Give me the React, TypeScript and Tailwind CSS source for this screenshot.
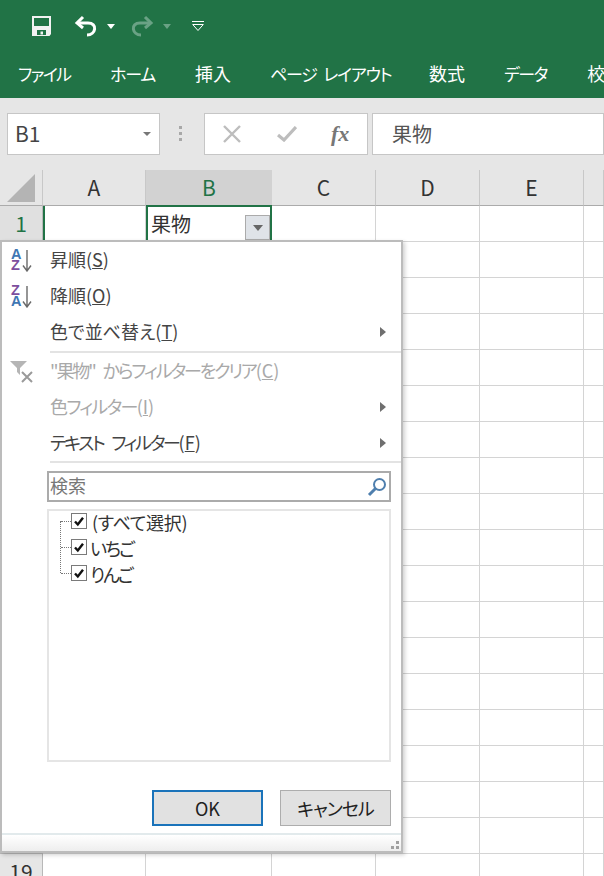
const font = { fontFamily: '"Noto Sans CJK JP", "Noto Sans", sans-serif' };

const Tri = ({ className }: { className: string }) => (
  <svg width="8" height="10" viewBox="0 0 8 10" className={className}><path d="M1 0 L7 5 L1 10Z" fill="#6f6f6f" /></svg>
);

function Item({ label, u, disabled, icon, arrow, track }: { label: string; u: string; disabled?: boolean; icon?: React.ReactNode; arrow?: boolean; track?: string }) {
  return (
    <div className={`flex h-[36px] items-center text-[18px] ${disabled ? 'text-[#a9a9a9]' : 'text-[#444444]'}`}>
      <div className="flex w-[48px] shrink-0 justify-start pl-[8px]">{icon}</div>
      <span className="mb-[2px] flex-1 whitespace-nowrap"><span className={track}>{label}</span>(<span className="underline">{u}</span>)</span>
      {arrow && <Tri className="mr-[14px]" />}
    </div>
  );
}

const AZ = ({ flip }: { flip?: boolean }) => (
  <svg width="26" height="24" viewBox="0 0 26 24">
    <text x="1" y="11" fontSize="14.5" fontWeight="700" fontFamily="Liberation Sans" fill={flip ? '#7d4f9e' : '#3f77b3'}>{flip ? 'Z' : 'A'}</text>
    <text x="1" y="22" fontSize="14.5" fontWeight="700" fontFamily="Liberation Sans" fill={flip ? '#3f77b3' : '#7d4f9e'}>{flip ? 'A' : 'Z'}</text>
    <path d="M17 2V22M13 17.5L17 23L21 17.5" stroke="#6a6a6a" strokeWidth="1.4" fill="none" />
  </svg>
);

function Check({ label, kana }: { label: string; kana?: boolean }) {
  return (
    <div className="flex h-[26px] items-center text-[18px] text-[#333333]">
      <div className="relative flex h-[16px] w-[16px] items-center justify-center border border-[#7a7a7a] bg-white">
        <svg width="12" height="12" viewBox="0 0 12 12"><path d="M2 6.5L4.8 9.5L10 2.8" stroke="#111" strokeWidth="2.4" fill="none" /></svg>
        <span className="absolute left-[-11px] top-[7px] w-[10px] border-t border-dotted border-[#777777]" />
      </div>
      <span className={kana ? 'ml-[3px] mt-[2px] tracking-[-2px]' : 'ml-[5px] mt-[2px] tracking-[-0.3px]'}>{label}</span>
    </div>
  );
}

const columns = ['', 'A', 'B', 'C', 'D', 'E', ''];
const rows = Array.from({ length: 19 }, (_, i) => i + 1);

export default function App() {
  return (
    <div className="relative flex h-[876px] w-[604px] flex-col overflow-hidden bg-white [font-feature-settings:'palt']" style={font}>
      {/* Title bar */}
      <div className="flex h-[52px] shrink-0 items-center bg-[#217346] pl-[32px]">
        <svg width="20" height="20" viewBox="0 0 20 20">
          <path fillRule="evenodd" d="M0 0H19V18L17.5 20H0Z M2 2V10H17V2Z M5 14V19H14V14Z" fill="#f2f2f2" />
          <rect x="8.5" y="15.5" width="2.5" height="3" fill="#f2f2f2" />
        </svg>
        <svg width="24" height="22" viewBox="0 0 24 22" className="ml-[22px]">
          <path d="M9 2L3 8L9 13" stroke="#fff" strokeWidth="3" fill="none" />
          <path d="M4 8H14C24 8 22 20 13 20" stroke="#fff" strokeWidth="3" fill="none" />
        </svg>
        <svg width="8" height="5" viewBox="0 0 8 5" className="ml-[9px]"><path d="M0 0H8L4 5Z" fill="#fff" /></svg>
        <svg width="24" height="22" viewBox="0 0 24 22" className="ml-[15px]">
          <path d="M15 2L21 8L15 13" stroke="#6aa285" strokeWidth="3" fill="none" />
          <path d="M20 8H10C0 8 2 20 11 20" stroke="#6aa285" strokeWidth="3" fill="none" />
        </svg>
        <svg width="8" height="5" viewBox="0 0 8 5" className="ml-[9px]"><path d="M0 0H8L4 5Z" fill="#6aa285" /></svg>
        <svg width="12" height="10" viewBox="0 0 12 10" className="ml-[21px]">
          <path d="M0 0.5H12M0.7 3.5H11.3L6 9.5Z" stroke="#fff" strokeWidth="1" fill="none" />
        </svg>
      </div>
      {/* Tabs */}
      <div className="flex h-[46px] shrink-0 items-center gap-[40px] bg-[#217346] pb-[3px] pl-[18px] text-[18px] whitespace-nowrap text-white">
        <span className="w-[52px] text-[17px] tracking-[-1.6px]">ファイル</span>
        <span className="w-[45px] text-[17px] tracking-[-1.2px]">ホーム</span>
        <span className="w-[35px]">挿入</span>
        <span className="w-[119px] text-[17px] tracking-[-1.2px] [word-spacing:4px]">ページ レイアウト</span>
        <span className="w-[35px]">数式</span>
        <span className="w-[44px] text-[17px] tracking-[-1.6px]">データ</span>
        <span className="w-[17px] overflow-hidden">校</span>
      </div>
      {/* Formula bar */}
      <div className="flex h-[72px] shrink-0 items-start bg-[#e6e6e6] pl-[7px] pt-[15px]">
        <div className="flex h-[42px] w-[153px] items-center justify-between border border-[#c6c6c6] bg-white pl-[7px] pr-[8px] text-[21px] text-[#444444]">
          <span>B1</span>
          <svg width="8" height="4" viewBox="0 0 8 4"><path d="M0 0H8L4 4Z" fill="#777777" /></svg>
        </div>
        <div className="ml-[19px] mt-[13px] flex w-[5px] flex-col gap-[3px]">
          <span className="h-[3px] w-[3px] bg-[#a8a8a8]" />
          <span className="h-[3px] w-[3px] bg-[#a8a8a8]" />
          <span className="h-[3px] w-[3px] bg-[#a8a8a8]" />
        </div>
        <div className="ml-[20px] flex h-[42px] w-[164px] items-center border border-[#c6c6c6] bg-white">
          <svg width="18" height="18" viewBox="0 0 18 18" className="ml-[18px]"><path d="M1 1L17 17M17 1L1 17" stroke="#bdbdbd" strokeWidth="2.4" /></svg>
          <svg width="20" height="16" viewBox="0 0 20 16" className="ml-[36px]"><path d="M1 9L7 14L19 1" stroke="#bdbdbd" strokeWidth="3.2" fill="none" /></svg>
          <span className="ml-[34px] text-[22px] leading-none font-bold italic text-[#777777]" style={{ fontFamily: '"Liberation Serif", serif' }}>fx</span>
        </div>
        <div className="ml-[4px] flex h-[42px] flex-1 items-center border border-[#c6c6c6] bg-white pl-[19px] text-[20px] text-[#555555]">果物</div>
      </div>
      {/* Sheet */}
      <div className="grid flex-1 grid-cols-[43px_103px_126px_104px_104px_104px_1fr] auto-rows-[36px] content-start">
        {columns.map((c, i) => (
          <div
            key={i}
            className={`relative flex h-[36px] items-center justify-center border-b border-b-[#ababab] text-[21px] ${i === 2 ? 'bg-[#d2d2d2] text-[#217346]' : 'border-r border-r-[#c8c8c8] bg-[#e6e6e6] text-[#333333]'}`}
          >
            {i === 0 && (
              <svg width="28" height="28" viewBox="0 0 28 28"><path d="M28 0V28H0Z" fill="#b4b4b4" /></svg>
            )}
            {c}
          </div>
        ))}
        {rows.map((r) =>
          columns.map((_, i) => {
            if (i === 0) {
              return (
                <div key={`${r}-0`} className={`flex items-start justify-center border-b border-r border-[#b8b8b8] pt-[2px] text-[21px] ${r === 1 ? 'bg-[#e0e0e0] text-[#217346]' : 'bg-[#e6e6e6] text-[#333333]'}`}>
                  {r === 1 || r === 19 ? r : ''}
                </div>
              );
            }
            if (r === 1 && i === 2) {
              return (
                <div key={`${r}-${i}`} className="relative mt-[-1px] flex h-[37px] items-center border-2 border-[#217346] pl-[3px] text-[20px] text-[#333333]">
                  果物
                  <div className="absolute right-[0px] top-[8px] flex h-[25px] w-[25px] items-center justify-center border border-[#ababab] bg-[#dfe3e8]">
                    <svg width="10" height="6" viewBox="0 0 10 6"><path d="M0 0H10L5 6Z" fill="#666666" /></svg>
                  </div>
                </div>
              );
            }
            return <div key={`${r}-${i}`} className={`border-b border-r border-[#d4d4d4] ${r === 1 && i === 1 ? 'border-l-2 border-l-[#217346]' : ''}`} />;
          })
        )}
      </div>
      {/* Filter popup */}
      <div className="absolute left-0 top-[240px] flex h-[613px] w-[403px] flex-col border-2 border-[#bcbcbc] bg-white shadow-[2px_2px_4px_rgba(0,0,0,0.18)]">
        <Item label="昇順" u="S" icon={<AZ />} />
        <Item label="降順" u="O" icon={<AZ flip />} />
        <Item label="色で並べ替え" u="T" arrow />
        <div className="ml-[48px] mt-[1px] h-[2px] bg-[#e3e3e3]" />
        <Item
          label={'"果物" からフィルターをクリア'}
          u="C"
          disabled
          track="tracking-[-2.1px] [word-spacing:6px]"
          icon={
            <svg width="26" height="26" viewBox="0 0 26 26">
              <path d="M0 3H17L10 10V17L7 14V10Z" fill="#b5b5b5" />
              <path d="M12 14L22 24M22 14L12 24" stroke="#9a9a9a" strokeWidth="2" />
            </svg>
          }
        />
        <Item label="色フィルター" u="I" disabled arrow track="tracking-[-1.7px]" />
        <Item label="テキスト フィルター" u="F" arrow track="tracking-[-2.3px] [word-spacing:6px]" />
        <div className="ml-[48px] h-[2px] bg-[#e3e3e3]" />
        <div className="ml-[45px] mr-[10px] mt-[8px] flex h-[31px] items-center justify-between border-2 border-[#ababab] pl-[1px] pr-[2px] text-[18px] text-[#777777]">
          <span className="mb-[2px]">検索</span>
          <svg width="20" height="20" viewBox="0 0 20 20">
            <circle cx="12.5" cy="7.5" r="5.5" stroke="#4f7fae" strokeWidth="2" fill="none" />
            <path d="M8.5 11.5L2 18" stroke="#4f7fae" strokeWidth="3" />
          </svg>
        </div>
        <div className="ml-[45px] mr-[10px] mt-[7px] h-[253px] border-2 border-[#e5e5e5] pl-[22px]">
          <div className="relative mt-[-3px]">
            <span className="absolute left-[-11px] top-[13px] h-[52px] border-l border-dotted border-[#777777]" />
            <Check label="(すべて選択)" />
            <Check label="いちご" kana />
            <Check label="りんご" kana />
          </div>
        </div>
        <div className="ml-[150px] mr-[10px] mt-[28px] flex justify-between text-[18px] text-[#222222]">
          <button className="flex h-[36px] w-[111px] items-center justify-center border-2 border-[#1a73ba] bg-[#e1e1e1]">OK</button>
          <button className="flex h-[36px] w-[111px] items-center justify-center border border-[#adadad] bg-[#e1e1e1] tracking-[-1px]">キャンセル</button>
        </div>
        <div className="relative mt-[7px] flex-1 border-t-2 border-[#e2eaec] bg-gradient-to-b from-white to-[#eeeeee]">
          <div className="absolute bottom-[2px] right-[2px] grid grid-cols-2 gap-[2px]">
            <span />
            <span className="h-[3px] w-[3px] bg-[#a0a0a0]" />
            <span className="h-[3px] w-[3px] bg-[#a0a0a0]" />
            <span className="h-[3px] w-[3px] bg-[#a0a0a0]" />
          </div>
        </div>
      </div>
    </div>
  );
}
